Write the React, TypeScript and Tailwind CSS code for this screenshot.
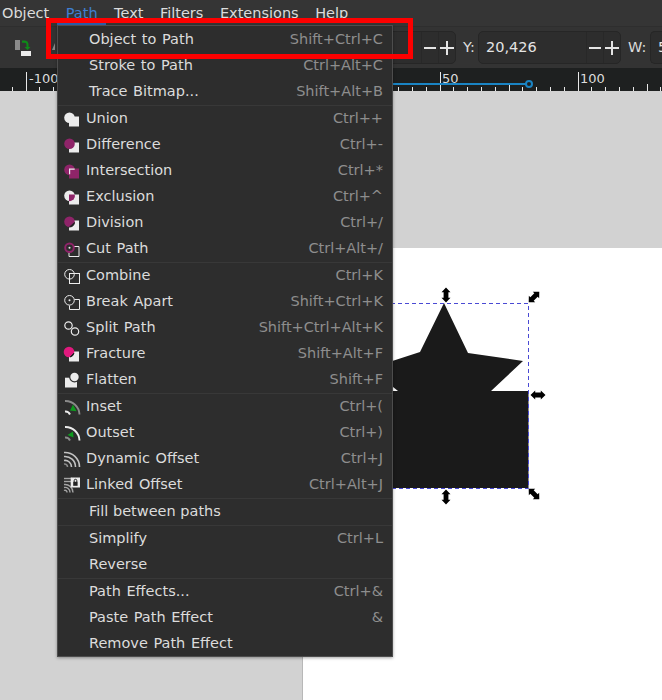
import React from "react";

const P = "#8f2469";
const W = "#ececec";

function Ico({ children }: { children: React.ReactNode }) {
  return <svg width="16" height="16" viewBox="0 0 16 16" className="shrink-0 overflow-visible">{children}</svg>;
}
const Sq = ({ f = W }: { f?: string }) => <rect x="5" y="5.5" width="10" height="10" fill={f} />;
const Arcs = ({ outer, inner }: { outer: string; inner: string }) => (
  <g fill="none" strokeWidth="1.9">
    <path d="M1 2A14 14 0 0 1 15.5 15.5" stroke={outer} />
    <path d="M1 12.5A5 5 0 0 1 6 15.5" stroke={inner} />
  </g>
);

const icons: Record<string, React.ReactNode> = {
  Union: <Ico><Sq /><circle cx="5.5" cy="6.8" r="5.3" fill={W} /></Ico>,
  Difference: <Ico><Sq /><circle cx="5.5" cy="6.8" r="5.3" fill={P} /></Ico>,
  Intersection: <Ico><circle cx="5.5" cy="6.8" r="5.3" fill={P} /><Sq f={P} /><path d="M5 5.5h5.7v1.2H6.2v4.6H5z" fill={W} /></Ico>,
  Exclusion: <Ico><Sq /><circle cx="5.5" cy="6.8" r="5.3" fill={W} /><path d="M5 5.5h5.8a5.3 5.3 0 0 1-5.8 6.6z" fill={P} /></Ico>,
  Division: <Ico><Sq /><circle cx="5.5" cy="6.8" r="5.3" fill={P} /><path d="M10.5 7.5a5.3 5.3 0 0 1-5 4.5l5-4.5z" fill="#222" stroke="#222" /></Ico>,
  "Cut Path": <Ico><path d="M10 5.5h5v10H5v-4" fill="none" stroke={W} /><circle cx="5.5" cy="6.8" r="4.3" fill="none" stroke={P} strokeWidth="2" /><circle cx="5.5" cy="6.8" r="1" fill={W} /></Ico>,
  Combine: <Ico><rect x="5.5" y="5.5" width="10" height="10" fill="none" stroke={W} /><circle cx="5.5" cy="6.3" r="4.8" fill="none" stroke={W} /></Ico>,
  "Break Apart": <Ico><path d="M10.5 5.5h5v10h-10v-4" fill="none" stroke={W} /><circle cx="5.5" cy="6.3" r="4.8" fill="none" stroke={W} /><circle cx="5.5" cy="6.3" r="1" fill={W} /></Ico>,
  "Split Path": <Ico><circle cx="4.5" cy="5.5" r="3.7" fill="none" stroke={W} strokeWidth="1.2" /><circle cx="11" cy="11.5" r="3.7" fill="none" stroke={W} strokeWidth="1.2" /></Ico>,
  Fracture: <Ico><Sq /><circle cx="5" cy="6" r="5.3" fill="#e0197d" /><path d="M10 7a5 5 0 0 1-4 4l4-4z" fill="#222" stroke="#222" /></Ico>,
  Flatten: <Ico><path d="M1 5.7h12v9.8H1z" fill={W} /><circle cx="10.5" cy="5" r="5.4" fill="#2d2d2d" /><circle cx="10.5" cy="5" r="4.2" fill={W} /></Ico>,
  Inset: <Ico><Arcs outer="#8a8a8a" inner="#ececec" /><path d="M9 5.5l3.6 6.8-6.6-.8z" fill="#0e9a1e" /></Ico>,
  Outset: <Ico><Arcs outer="#ececec" inner="#8a8a8a" /><path d="M3.5 10l5.5-3.5.5 6z" fill="#0e9a1e" /></Ico>,
  "Dynamic Offset": <Ico><g fill="none" strokeWidth="1.6" stroke="#c2c2c2"><path d="M0 1.5A14.5 14.5 0 0 1 15.5 16" /><path d="M0 5.5A10.5 10.5 0 0 1 11.5 16" /><path d="M0 9.5A6.5 6.5 0 0 1 7.5 16" /></g><path d="M0 13a3 3 0 0 1 3.5 3" fill="none" stroke="#8a8a8a" strokeWidth="1.6" /></Ico>,
  "Linked Offset": <Ico><g fill="none" strokeWidth="1.4" stroke="#a5a5a5"><path d="M0 1.5h8" /><path d="M0 4.5h8" /><path d="M0 7.5A8 8 0 0 1 9 15.5" /><path d="M0 10.5A5 5 0 0 1 6 15.5" /><path d="M0 13.5A2 2 0 0 1 3 15.5" /></g><rect x="6.7" y="0.5" width="9.3" height="10" fill={W} /><rect x="9.2" y="4.8" width="4.4" height="4" fill="#222" /><path d="M10.2 5V3.6a1.3 1.3 0 0 1 2.6 0V5" fill="none" stroke="#222" /></Ico>,
};

type Row = { t: string; k?: string; sep?: boolean };
const rows: Row[] = [
  { t: "Object to Path", k: "Shift+Ctrl+C" },
  { t: "Stroke to Path", k: "Ctrl+Alt+C" },
  { t: "Trace Bitmap...", k: "Shift+Alt+B", sep: true },
  { t: "Union", k: "Ctrl++" },
  { t: "Difference", k: "Ctrl+-" },
  { t: "Intersection", k: "Ctrl+*" },
  { t: "Exclusion", k: "Ctrl+^" },
  { t: "Division", k: "Ctrl+/" },
  { t: "Cut Path", k: "Ctrl+Alt+/", sep: true },
  { t: "Combine", k: "Ctrl+K" },
  { t: "Break Apart", k: "Shift+Ctrl+K" },
  { t: "Split Path", k: "Shift+Ctrl+Alt+K" },
  { t: "Fracture", k: "Shift+Alt+F" },
  { t: "Flatten", k: "Shift+F", sep: true },
  { t: "Inset", k: "Ctrl+(" },
  { t: "Outset", k: "Ctrl+)" },
  { t: "Dynamic Offset", k: "Ctrl+J" },
  { t: "Linked Offset", k: "Ctrl+Alt+J", sep: true },
  { t: "Fill between paths", sep: true },
  { t: "Simplify", k: "Ctrl+L" },
  { t: "Reverse", sep: true },
  { t: "Path Effects...", k: "Ctrl+&" },
  { t: "Paste Path Effect", k: "&" },
  { t: "Remove Path Effect" },
];

function Ruler() {
  const ticks: React.ReactNode[] = [];
  for (let i = -2; i < 50; i++) {
    const x = Math.round(25.6 + i * 13.8);
    const h = i % 10 === 0 ? 19 : i % 5 === 0 ? 7 : 4;
    ticks.push(<rect key={i} x={x} y={23 - h} width="1" height={h} fill="#e8e8e8" />);
  }
  return (
    <svg width="662" height="23" className="absolute left-0 top-0">
      {ticks}
      <rect x="380" y="15" width="147" height="2" fill="#1a84c4" />
      <circle cx="529" cy="16" r="3" fill="#1e2020" stroke="#1a84c4" strokeWidth="2" />
    </svg>
  );
}

function Arrow({ d, className }: { d: string; className: string }) {
  return (
    <svg width="16" height="16" viewBox="0 0 16 16" className={`absolute ${className}`}>
      <g transform={`rotate(${d} 8 8)`}>
        <path d="M8 0.5L12.5 5.2H10.4V10.8H12.5L8 15.5L3.5 10.8H5.6V5.2H3.5z" fill="#000" />
      </g>
    </svg>
  );
}

function Spin({ className, children }: { className: string; children?: React.ReactNode }) {
  return (
    <div className={`h-[33px] rounded-[5px] border border-[#262626] bg-[#2d2d2d] flex items-center text-[#e4e4e4] ${className}`}>
      {children}
    </div>
  );
}

const PM = () => (
  <>
    <span className="w-[17px] h-full border-l border-[#282828] flex items-center justify-center">
      <svg width="14" height="14" viewBox="0 0 14 14"><rect x="1" y="6" width="12" height="2" fill="#e4e4e4" /></svg>
    </span>
    <span className="w-[17px] h-full border-l border-[#282828] flex items-center justify-center">
      <svg width="14" height="14" viewBox="0 0 14 14"><path d="M0 6h6V0h2v6h6v2H8v6H6V8H0z" fill="#e4e4e4" /></svg>
    </span>
  </>
);

export default function App() {
  return (
    <div className="relative w-[662px] h-[700px] overflow-hidden flex flex-col bg-[#d2d2d2] text-[14.5px]" style={{ fontFamily: '"DejaVu Sans", sans-serif' }}>
      <div className="h-[26px] shrink-0 bg-[#353535] flex items-center pl-[2px] pt-px gap-[16.5px] text-[#dcdcdc]">
        <span>Object</span>
        <span className="text-[#3f7fd0]">Path</span>
        <span>Text</span>
        <span>Filters</span>
        <span>Extensions</span>
        <span>Help</span>
      </div>
      <div className="h-[42px] shrink-0 bg-[#333333] border-t border-[#2e2e2e] flex items-center">
        <svg width="60" height="20" viewBox="0 0 60 20" className="ml-[14px] shrink-0">
          <rect x="1" y="2" width="5" height="10" fill="#8b8b8b" />
          <rect x="7" y="13" width="10" height="5" fill="#ececec" />
          <path d="M8 2.5h3a4 4 0 0 1 3.5 4V9h2l-3 3-3-3h2V7a2 2 0 0 0-2-2.2H8z" fill="#0e8a18" />
          <path d="M38 12l3-7v7z" fill="#888" />
        </svg>
        <div className="ml-auto flex items-center text-[#dcdcdc]">
          <Spin className="w-[77px] justify-end mr-[7px]"><PM /></Spin>
          <span className="w-[15px]">Y:</span>
          <Spin className="w-[143px]">
            <span className="pl-[7px] flex-1">20,426</span>
            <PM />
          </Spin>
          <span className="w-[22px] ml-[7px]">W:</span>
          <Spin className="w-[12px] rounded-r-none border-r-0 overflow-hidden"><span className="pl-[7px] w-[5px]">5</span></Spin>
        </div>
      </div>
      <div className="relative h-[23px] shrink-0 bg-[#1e2020] text-[13px] text-[#dcdcdc]">
        <Ruler />
        <span className="absolute left-[29px] top-[1px]">-100</span>
        <span className="absolute left-[442px] top-[1px]">50</span>
        <span className="absolute left-[580px] top-[1px]">100</span>
      </div>
      <div className="relative flex-1 flex flex-col">
        <div className="h-[157px] shrink-0" />
        <div className="flex-1 flex">
          <div className="w-[303px] shrink-0 border-r border-[#b8b8b8]" />
          <div className="flex-1 bg-white" />
        </div>
      </div>

      <svg width="662" height="700" className="absolute left-0 top-0 pointer-events-none">
        <path d="M300 391 L420 352 L444 303 L468 353 L523 361 L491 391 L528.5 391 L528.5 488 L300 488 Z" fill="#1a1a1a" />
        <path d="M393 387 L398 391 L393 391 Z" fill="#fff" />
        <path d="M300 303.5H528.5V488.5H300" fill="none" stroke="#4a4ad4" strokeWidth="1" strokeDasharray="4 3" />
      </svg>
      <Arrow d="0" className="left-[438px] top-[287px]" />
      <Arrow d="0" className="left-[438px] top-[489px]" />
      <Arrow d="90" className="left-[530px] top-[387px]" />
      <Arrow d="45" className="left-[526px] top-[289px]" />
      <Arrow d="-45" className="left-[526px] top-[486px]" />

      <div className="absolute left-[57px] top-[25px] w-[336px] h-[632px] bg-[#2d2d2d] border border-[#4d4d4d] pt-px shadow-[0_1px_3px_rgba(0,0,0,0.35)]">
        <div className="absolute -left-px -top-[3px] w-[49px] h-[2px] bg-[#2a5ca8]" />
        {rows.map((r) => (
          <React.Fragment key={r.t}>
            <div className="h-[26px] flex items-center justify-between pr-[9px]">
              {icons[r.t] ? (
                <div className="flex items-center pl-[6px] gap-[6px] text-[#dcdcdc] [word-spacing:1px]">
                  {icons[r.t]}
                  <span>{r.t}</span>
                </div>
              ) : (
                <span className={r.t === "Fill between paths" ? "pl-[31px] text-[#dcdcdc]" : "pl-[31px] text-[#dcdcdc] [word-spacing:1px]"}>{r.t}</span>
              )}
              {r.k && <span className="text-[#8e8e8e]">{r.k}</span>}
            </div>
            {r.sep && <div className="h-px bg-[#383838]" />}
          </React.Fragment>
        ))}
      </div>

      <div className="absolute left-[46px] top-[18px] w-[367px] h-[41px] border-[5px] border-[#fd0000]" />
    </div>
  );
}
